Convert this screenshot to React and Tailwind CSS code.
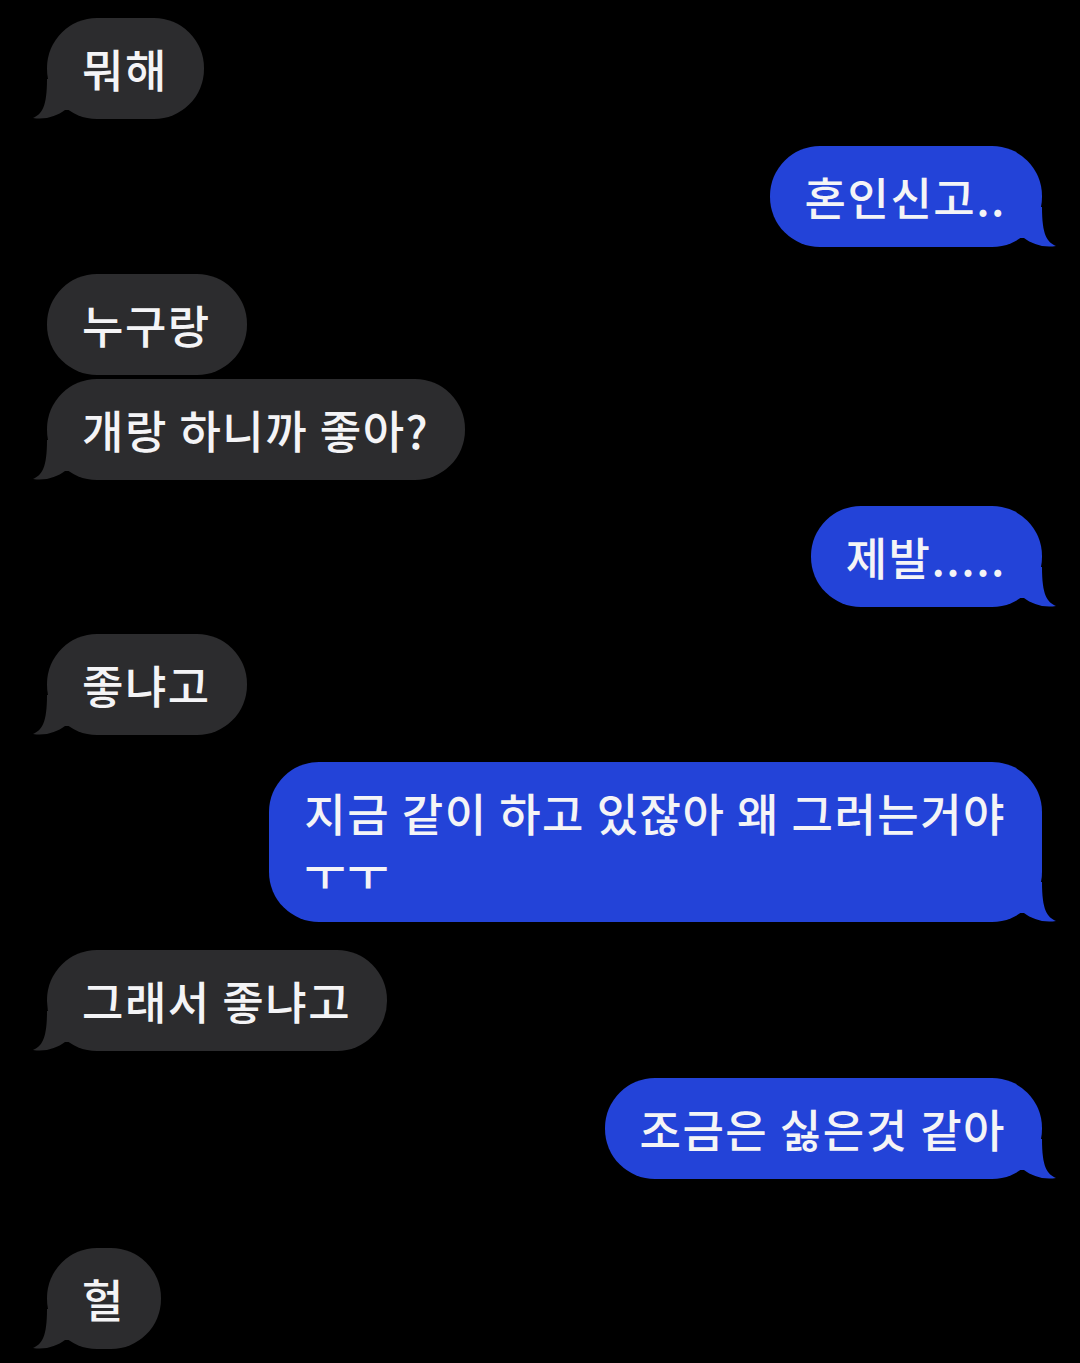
function Tail({ side, color }) {
  return (
    <svg
      width="60"
      height="40"
      viewBox="0 0 60 40"
      className={
        side === "left"
          ? "absolute bottom-0 left-[-15px]"
          : "absolute bottom-0 right-[-15px] scale-x-[-1]"
      }
    >
      <path d="M15 0 C15 28 10 35 1 39 C14 41 25 37 33 31 L60 31 L60 0 Z" fill={color} />
    </svg>
  );
}

function Bubble({ from, tail, children, className = "" }) {
  const me = from === "me";
  return (
    <div className={`flex ${me ? "justify-end" : "justify-start"} ${className}`}>
      <div
        className={`relative rounded-[50px] pl-[35px] pr-[36px] py-[21px] text-[45px] leading-[59px] tracking-[1.5px] font-medium text-[#f4f4f6] ${
          me ? "bg-[#2343d8]" : "bg-[#2c2c2e]"
        }`}
      >
        {tail && <Tail side={me ? "right" : "left"} color={me ? "#2343d8" : "#2c2c2e"} />}
        <span className="relative">{children}</span>
      </div>
    </div>
  );
}

export default function App() {
  return (
    <div
      className="min-h-[1363px] w-[1080px] bg-black pl-[47px] pr-[38px] pt-[18px]"
      style={{ fontFamily: '"Noto Sans CJK KR", "Noto Sans", sans-serif' }}
    >
      <Bubble from="them" tail>뭐해</Bubble>
      <Bubble from="me" tail className="mt-[27px]">혼인신고..</Bubble>
      <Bubble from="them" className="mt-[27px]">누구랑</Bubble>
      <Bubble from="them" tail className="mt-[4px]">개랑 하니까 좋아?</Bubble>
      <Bubble from="me" tail className="mt-[26px]">제발.....</Bubble>
      <Bubble from="them" tail className="mt-[27px]">좋냐고</Bubble>
      <Bubble from="me" tail className="mt-[27px]">
        지금 같이 하고 있잖아 왜 그러는거야
        <br />
        ㅜㅜ
      </Bubble>
      <Bubble from="them" tail className="mt-[28px]">그래서 좋냐고</Bubble>
      <Bubble from="me" tail className="mt-[27px]">조금은 싫은것 같아</Bubble>
      <Bubble from="them" tail className="mt-[69px]">헐</Bubble>
    </div>
  );
}
